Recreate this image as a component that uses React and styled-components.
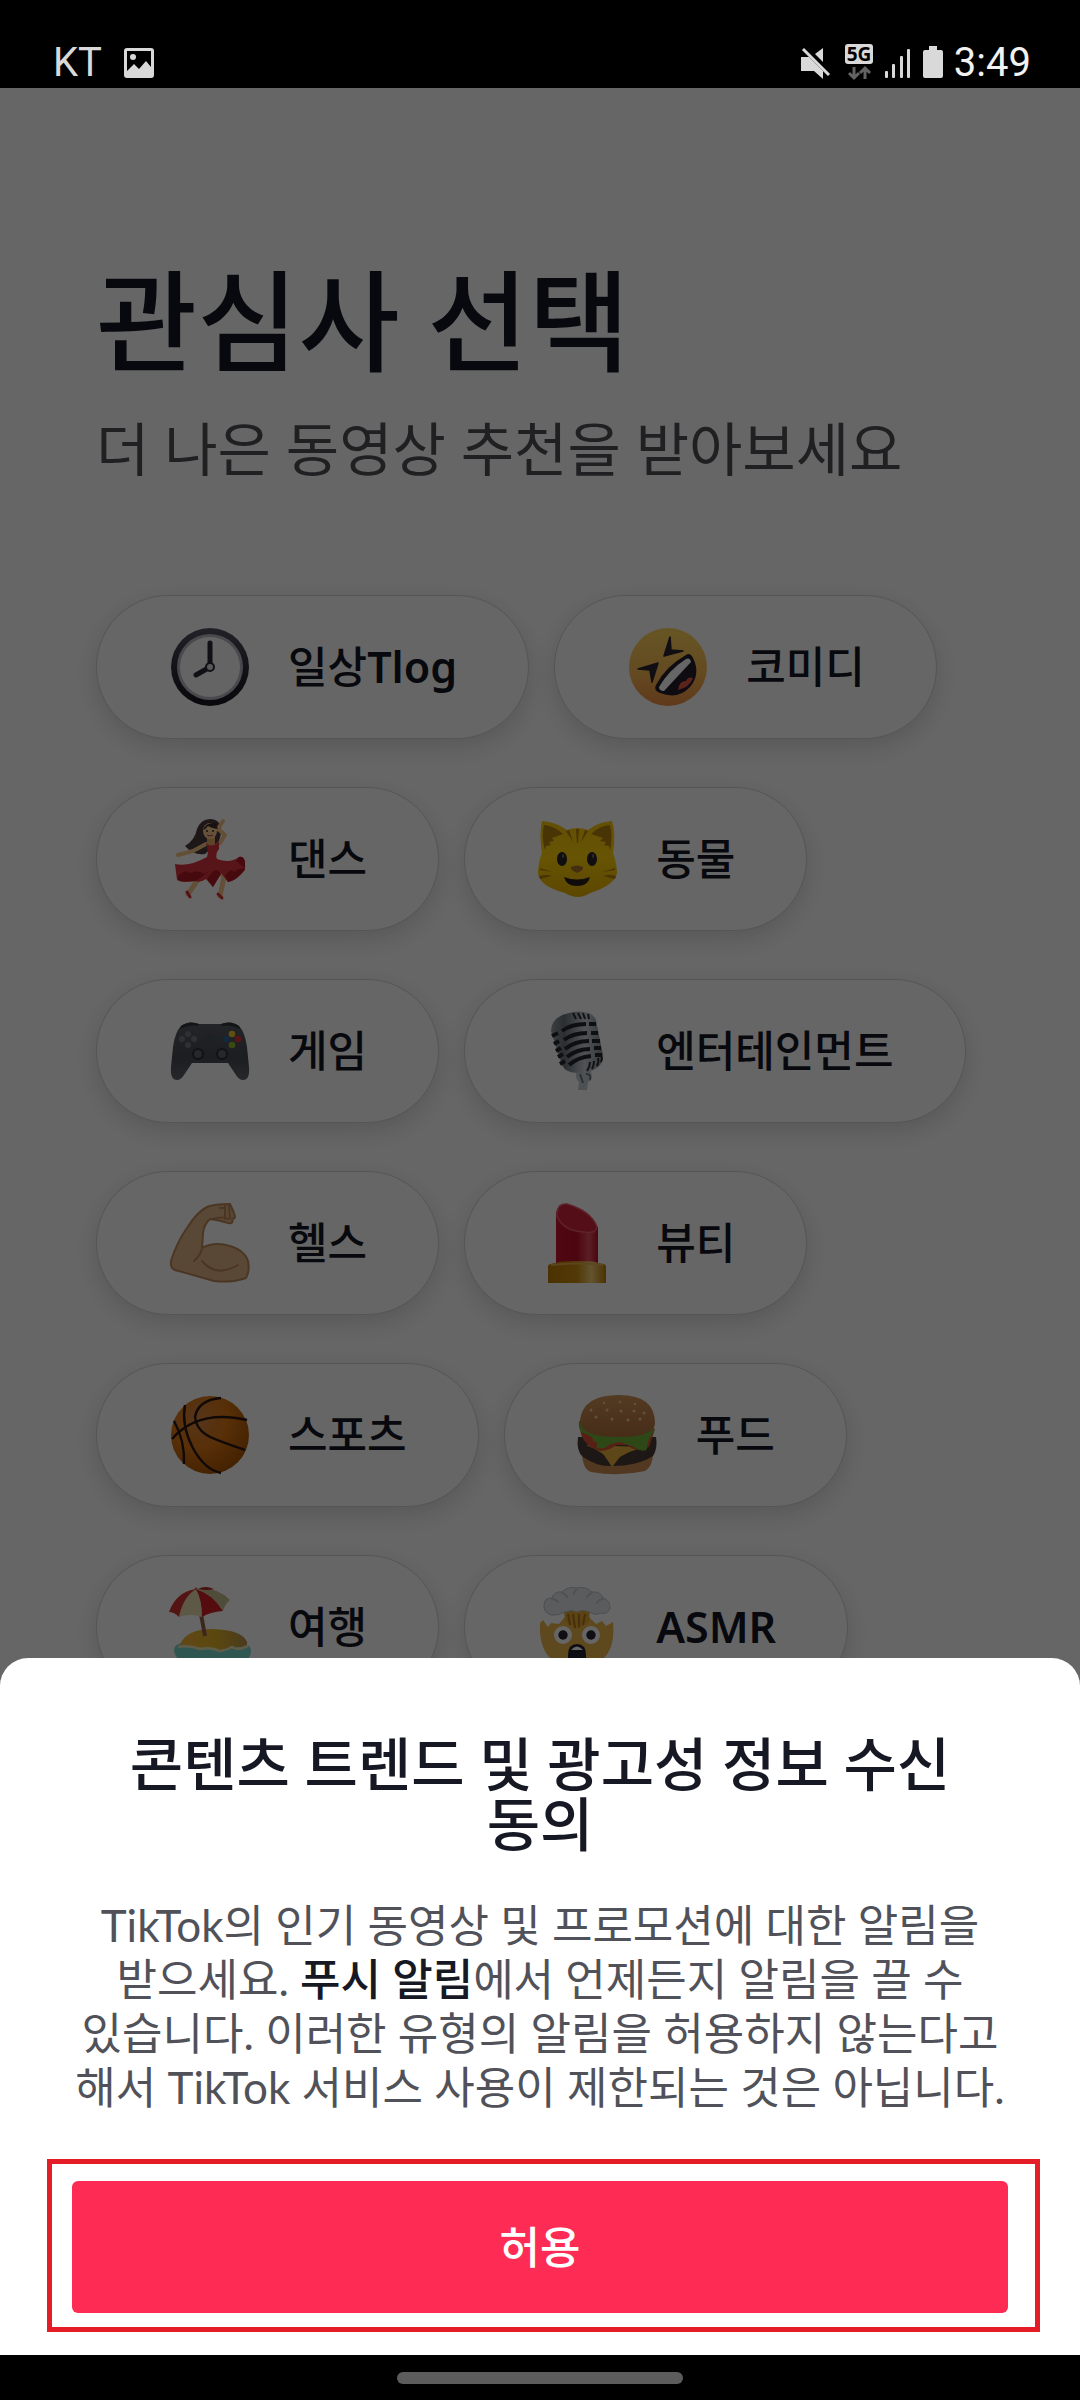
import React, { useState } from 'react';
import styled, { createGlobalStyle, ThemeProvider } from 'styled-components';

const theme = {
  color: {
    text: '#161823',
    subText: '#515259',
    primary: '#fe2c55',
    frame: '#e51d27',
    status: '#d9d9d9',
    home: '#5c5c5c',
  },
  fontSize: {
    large: '110px',
    title: '58px',
    body: '44px',
    label: '43px',
    status: '40px',
  },
};

const interests = [
  { name: '일상', latin: 'Tlog', icon: <ClockIcon /> },
  { name: '코미디', icon: <LaughIcon /> },
  { name: '댄스', icon: <DanceIcon /> },
  { name: '동물', icon: <CatIcon /> },
  { name: '게임', icon: <GameIcon /> },
  { name: '엔터테인먼트', icon: <MicIcon /> },
  { name: '헬스', icon: <MuscleIcon /> },
  { name: '뷰티', icon: <LipstickIcon /> },
  { name: '스포츠', icon: <BasketballIcon /> },
  { name: '푸드', icon: <BurgerIcon /> },
  { name: '여행', icon: <BeachIcon /> },
  { name: '', latin: 'ASMR', icon: <MindBlownIcon /> },
];

export default function App() {
  const [selected, setSelected] = useState([]);

  const handleSelect = id => {
    setSelected(list =>
      list.includes(id) ? list.filter(item => item !== id) : [...list, id]
    );
  };

  return (
    <ThemeProvider theme={theme}>
      <GlobalStyle />
      <Phone>
        <StatusBar />
        <Screen>
          <Content>
            <Title>관심사 선택</Title>
            <SubTitle>더 나은 동영상 추천을 받아보세요</SubTitle>
            <ChipList>
              {interests.map(({ name, latin, icon }, id) => (
                <Chip
                  key={id}
                  type='button'
                  aria-pressed={selected.includes(id)}
                  onClick={() => handleSelect(id)}
                >
                  {icon}
                  <span>
                    {name}
                    {latin && <Latin>{latin}</Latin>}
                  </span>
                </Chip>
              ))}
            </ChipList>
          </Content>
          <Dim />
          <Sheet role='dialog' aria-labelledby='sheet-title'>
            <SheetTitle id='sheet-title'>
              콘텐츠 트렌드 및 광고성 정보 수신 동의
            </SheetTitle>
            <SheetText>
              TikTok의 인기 동영상 및 프로모션에 대한 알림을 받으세요.{' '}
              <strong>푸시 알림</strong>에서 언제든지 알림을 끌 수 있습니다.
              이러한 유형의 알림을 허용하지 않는다고 해서 TikTok 서비스 사용이
              제한되는 것은 아닙니다.
            </SheetText>
            <Frame>
              <AllowButton type='button'>허용</AllowButton>
            </Frame>
          </Sheet>
        </Screen>
        <NavBar>
          <HomeHandle />
        </NavBar>
      </Phone>
    </ThemeProvider>
  );
}

function StatusBar() {
  return (
    <Status>
      <StatusGroup $gap='22px'>
        <span>KT</span>
        <svg width='30' height='30' viewBox='0 0 30 30' fill='currentColor'>
          <path
            fillRule='evenodd'
            d='M3 0h24a3 3 0 0 1 3 3v24a3 3 0 0 1-3 3H3a3 3 0 0 1-3-3V3a3 3 0 0 1 3-3zM3 3v20l7-7 5 5 7-8 5 6V3z'
          />
          <circle cx='9' cy='9' r='3' />
        </svg>
      </StatusGroup>
      <StatusGroup $gap='10px'>
        <svg width='34' height='34' viewBox='0 0 34 34' fill='currentColor'>
          <path d='M1 11h8l14 14v8l-9-8H1zM23 2v14l-8-8z' />
          <path d='M5 1l26 26' stroke='#000' strokeWidth='3' />
          <path d='M3 3l26 26' stroke='currentColor' strokeWidth='3' />
        </svg>
        <svg width='30' height='45' viewBox='0 -4 30 45'>
          <rect x='1' width='28' height='20' rx='3' fill='currentColor' />
          <text
            x='15'
            y='17'
            textAnchor='middle'
            fontFamily='Open Sans, sans-serif'
            fontWeight='700'
            fontSize='19'
            fill='#000'
          >
            5G
          </text>
          <path
            d='M10 23v11M5 29l5 5 5-5M21 35V24M16 29l5-5 5 5'
            fill='none'
            stroke='#636363'
            strokeWidth='3'
          />
        </svg>
        <svg width='28' height='32' viewBox='0 0 28 32' fill='currentColor'>
          <rect x='1' y='24' width='3' height='7' rx='1' />
          <rect x='8' y='17' width='3' height='14' rx='1' />
          <rect x='16' y='9' width='3' height='22' rx='1' />
          <rect x='23' y='2' width='3' height='29' rx='1' />
        </svg>
        <svg width='22' height='33' viewBox='0 0 22 33' fill='currentColor'>
          <path d='M7 0h8v4h4a2 2 0 0 1 2 2v24a2 2 0 0 1-2 2H3a2 2 0 0 1-2-2V6a2 2 0 0 1 2-2h4z' />
        </svg>
        <Clock>3:49</Clock>
      </StatusGroup>
    </Status>
  );
}

function Emoji({ children }) {
  return (
    <svg width='80' height='80' viewBox='0 0 80 80' overflow='visible' aria-hidden='true'>
      {children}
    </svg>
  );
}

function ClockIcon() {
  return (
    <Emoji>
      <defs>
        <linearGradient id='clock' x1='0' y1='0' x2='0' y2='1'>
          <stop offset='0' stopColor='#555363' />
          <stop offset='0.6' stopColor='#2b2936' />
          <stop offset='1' stopColor='#17151d' />
        </linearGradient>
      </defs>
      <circle cx='40' cy='40' r='39' fill='url(#clock)' />
      <circle cx='40' cy='40' r='33' fill='#b9b7c1' />
      <circle cx='40' cy='40' r='30' fill='#f9f9f9' />
      <path
        d='M40 40V16M40 40L26 48'
        stroke='#2b2937'
        strokeWidth='5'
        strokeLinecap='round'
      />
      <circle cx='40' cy='40' r='4' fill='#ddd' stroke='#2b2937' strokeWidth='2' />
    </Emoji>
  );
}

function LaughIcon() {
  return (
    <Emoji>
      <defs>
        <linearGradient id='laugh' x1='0' y1='0' x2='0' y2='1'>
          <stop offset='0' stopColor='#ffd65a' />
          <stop offset='0.55' stopColor='#fbbb55' />
          <stop offset='1' stopColor='#ee8f42' />
        </linearGradient>
      </defs>
      <circle cx='40' cy='40' r='39' fill='url(#laugh)' />
      <path
        d='M42 10L36 29L55 24L43 23zM10 42L30 36L24 55L22 43z'
        fill='#2b2630'
        stroke='#2b2630'
        strokeWidth='1.6'
        strokeLinejoin='round'
      />
      <path
        d='M58 28Q62 25 65 31Q73 47 62 60Q50 73 32 66Q25 63 28 58Q38 39 58 28z'
        fill='#231f2c'
      />
      <path d='M58 32Q62 30 63 35L36 64Q31 64 31 60Q41 43 58 32z' fill='#fff' />
      <path d='M50 63Q51 54 58 54Q60 49 65 51Q62 60 50 63z' fill='#e5584a' />
    </Emoji>
  );
}

function DanceIcon() {
  return (
    <Emoji>
      <path
        d='M40 0C52 0 53 12 49 22L35 35Q24 37 15 27Q25 21 27 10Q31 0 40 0z'
        fill='#4d3a3c'
      />
      <path
        d='M36 25L23 32L8 36M50 24L55 16L48 10L53 2'
        fill='none'
        stroke='#f5c687'
        strokeWidth='4'
        strokeLinecap='round'
        strokeLinejoin='round'
      />
      <path d='M37 18h8v10h-8z' fill='#e3aa68' />
      <ellipse cx='40' cy='12' rx='7' ry='8' fill='#fbd091' />
      <path d='M33 11Q36 3 45 4L48 10Q41 9 38 7Q36 10 33 11z' fill='#3d2b30' />
      <circle cx='37' cy='12' r='1' fill='#3d2b30' />
      <circle cx='43' cy='12' r='1' fill='#3d2b30' />
      <path d='M37 16Q40 18 43 16' stroke='#b2313c' fill='none' />
      <path
        d='M42 48L27 62L18 75M47 48L54 58L50 77'
        fill='none'
        stroke='#f5c687'
        strokeWidth='5'
        strokeLinecap='round'
        strokeLinejoin='round'
      />
      <path
        d='M36 24Q42 30 49 22L49 30Q45 35 47 40Q60 45 69 38Q76 36 75 51Q65 63 58 63L51 54L43 68L36 60Q29 65 23 61Q13 65 7 61L5 45Q19 48 37 38Q39 33 36 24z'
        fill='#d9353f'
      />
      <path
        d='M8 57Q15 50 20 54Q29 50 34 55L41 51L26 62Q17 64 8 61zM55 57Q61 48 64 53Q70 48 75 50Q67 61 58 63zM43 52L48 51L51 55L43 68L37 60zM69 38Q76 36 75 49Q69 45 66 42z'
        fill='#b01b23'
      />
      <path
        d='M17 73L20 78M48 75L52 79'
        stroke='#d32f3b'
        strokeWidth='3'
        strokeLinecap='round'
      />
    </Emoji>
  );
}

function CatIcon() {
  return (
    <Emoji>
      <defs>
        <linearGradient id='cat' x1='0' y1='0' x2='0' y2='1'>
          <stop offset='0' stopColor='#fac60a' />
          <stop offset='0.5' stopColor='#ffd30a' />
          <stop offset='1' stopColor='#e8b000' />
        </linearGradient>
      </defs>
      <path
        d='M4 2Q18 3 29 11Q39 7 50 11Q60 3 74 2Q78 15 75 34Q79 46 79 54Q77 66 52 74Q40 82 27 74Q1 67 0 54Q0 44 4 34Q1 16 4 2z'
        fill='url(#cat)'
      />
      <path
        d='M6 6Q17 7 25 15L14 19L16 22L11 23L13 26L8 27L7 31Q3 18 6 6zM72 6Q61 7 53 15L65 19L62 22L68 23L66 26L71 27L72 31Q75 18 72 6z'
        fill='#b5820c'
      />
      <path
        d='M38 10h3l-1 14h-1zM28 12l3-1l4 12zM50 12l-3-1l-4 12zM2 49l13 4l-13-2zM1 57q7-2 13 0l-12 3zM77 49l-13 4l13-2zM78 57q-7-2-13 0l12 3z'
        fill='#b78306'
      />
      <ellipse cx='24' cy='40' rx='5' ry='7' fill='#28242b' />
      <ellipse cx='54' cy='40' rx='5' ry='7' fill='#28242b' />
      <ellipse cx='25' cy='37' rx='1' ry='2' fill='#77716e' />
      <ellipse cx='55' cy='37' rx='1' ry='2' fill='#77716e' />
      <path d='M33 48Q39 45 45 48Q46 51 39 54Q32 51 33 48z' fill='#b07628' />
      <path d='M26 58Q39 63 52 58Q50 67 39 67Q28 67 26 58z' fill='#28201c' />
    </Emoji>
  );
}

function GameIcon() {
  return (
    <Emoji>
      <defs>
        <linearGradient id='pad' x1='0' y1='0' x2='0' y2='1'>
          <stop offset='0' stopColor='#585c63' />
          <stop offset='0.6' stopColor='#464a51' />
          <stop offset='1' stopColor='#606369' />
        </linearGradient>
      </defs>
      <path
        d='M11 15Q19 9 29 13H51Q61 9 69 15Q75 21 77 36L79 56Q80 69 73 69Q69 69 66 64L58 52H22L14 64Q11 69 7 69Q0 69 1 56L3 36Q5 21 11 15z'
        fill='url(#pad)'
      />
      <path d='M11 15Q19 9 29 13L28 15Q19 13 10 18zM69 15Q61 9 51 13L52 15Q61 13 70 18z' fill='#33363c' />
      {[28, 52].map(x => (
        <g key={x}>
          <circle cx={x} cy='43' r='6' fill='#2a2d33' />
          <circle cx={x} cy='43' r='4' fill='#5d6168' />
        </g>
      ))}
      <g fill='#737a82'>
        <circle cx='18' cy='23' r='3' />
        <circle cx='18' cy='34' r='3' />
        <circle cx='12' cy='28' r='3' />
        <circle cx='24' cy='28' r='3' />
      </g>
      <circle cx='40' cy='28' r='5' fill='#475459' />
      <circle cx='62' cy='23' r='3.3' fill='#edc62f' />
      <circle cx='68' cy='28' r='3.3' fill='#dc3436' />
      <circle cx='62' cy='34' r='3.3' fill='#93ba30' />
      <circle cx='56' cy='28' r='3.3' fill='#2b6599' />
    </Emoji>
  );
}

function MicIcon() {
  return (
    <Emoji>
      <defs>
        <linearGradient id='mic' x1='0' y1='0' x2='1' y2='0'>
          <stop offset='0' stopColor='#969ea3' />
          <stop offset='0.25' stopColor='#6c757c' />
          <stop offset='0.65' stopColor='#c9d0d4' />
          <stop offset='1' stopColor='#848c92' />
        </linearGradient>
      </defs>
      <path d='M38 60L53 59Q55 71 50 71L49 79H40L41 71Q37 68 38 60z' fill='#c3cbd0' />
      <path d='M42 63l3 9M48 63q6 0 4 6' stroke='#6a747b' strokeWidth='2' fill='none' />
      <path
        d='M13 20Q13 6 31 2Q53 -3 58 9L65 44Q66 56 50 61Q29 65 24 54z'
        fill='url(#mic)'
      />
      <g fill='none' stroke='#24272b' strokeWidth='4'>
        <path d='M24 20Q33 13 48 13M26 29Q35 22 49 22M27 38Q37 30 51 30M29 46Q39 38 52 38M31 54Q40 46 53 45' />
        <path d='M51 13h7M53 22h7M54 30h8M56 37h7M57 44h7' />
        <path d='M14 25l6-3M16 33l5-3M18 40l5-3M20 46l5-3M22 53l5-3' strokeWidth='4' />
      </g>
      <path
        d='M35 2l3 6M40 2l3 6M45 2l2 6M50 3l1 5M49 60q3-4 3-9M54 58q2-4 2-8M59 55q2-4 1-8M63 51q1-3 1-5'
        stroke='#292d31'
        strokeWidth='2'
        fill='none'
      />
    </Emoji>
  );
}

function MuscleIcon() {
  return (
    <Emoji>
      <path
        d='M37 4Q44 1 60 1Q63 7 65 13Q65 16 62 16Q64 21 58 20Q49 17 40 16Q34 21 33 30L32 45Q43 39 56 42Q74 46 78 58Q80 68 76 75Q62 80 44 78Q20 71 5 67Q0 65 1 58Q7 39 17 25Q27 9 37 4z'
        fill='#e2b587'
        stroke='#bb8659'
        strokeWidth='2'
        strokeLinejoin='round'
      />
      <path
        d='M32 45Q31 52 24 58M32 58Q46 75 68 62M43 16Q51 13 59 16M55 3v13M59 3l1 12M50 5l5 0'
        fill='none'
        stroke='#bb8659'
        strokeWidth='2'
        strokeLinecap='round'
      />
    </Emoji>
  );
}

function LipstickIcon() {
  return (
    <Emoji>
      <defs>
        <linearGradient id='lip' x1='0' y1='0' x2='1' y2='0'>
          <stop offset='0' stopColor='#c8152e' />
          <stop offset='0.5' stopColor='#bd1028' />
          <stop offset='0.78' stopColor='#e34c5a' />
          <stop offset='1' stopColor='#bd1028' />
        </linearGradient>
        <linearGradient id='gold' x1='0' y1='0' x2='1' y2='0'>
          <stop offset='0' stopColor='#bd7e04' />
          <stop offset='0.5' stopColor='#cc8f12' />
          <stop offset='0.75' stopColor='#f6cf77' />
          <stop offset='1' stopColor='#bd7e04' />
        </linearGradient>
      </defs>
      <path d='M18 10Q20 0 28 1Q52 6 60 25V61H18z' fill='url(#lip)' />
      <path
        d='M19 10Q20 0 29 1Q53 8 59 24Q58 31 46 29Q25 28 19 13z'
        fill='#d2243d'
        stroke='#ea5a68'
        strokeWidth='1.5'
      />
      <path d='M10 63Q10 61 18 60Q20 58 39 58Q58 58 60 60Q68 61 68 63V80H10z' fill='url(#gold)' />
      <path d='M13 62Q39 59 65 62' stroke='#e8b04f' strokeWidth='2' fill='none' />
    </Emoji>
  );
}

function BasketballIcon() {
  return (
    <Emoji>
      <defs>
        <radialGradient id='ball' cx='0.35' cy='0.3' r='0.75'>
          <stop offset='0' stopColor='#d68644' />
          <stop offset='0.5' stopColor='#dc7714' />
          <stop offset='1' stopColor='#a85404' />
        </radialGradient>
      </defs>
      <circle cx='40' cy='40' r='39' fill='url(#ball)' />
      <path
        d='M2 44Q28 14 77 25M51 3Q28 5 25 22C27 43 50 45 75 55M15 10C10 37 28 73 51 78M4 26Q15 46 14 69'
        fill='none'
        stroke='#2c1710'
        strokeWidth='2.4'
      />
    </Emoji>
  );
}

function BurgerIcon() {
  return (
    <Emoji>
      <defs>
        <linearGradient id='bun' x1='0' y1='0' x2='0' y2='1'>
          <stop offset='0' stopColor='#d29359' />
          <stop offset='1' stopColor='#b0703c' />
        </linearGradient>
      </defs>
      <path d='M4 56Q4 74 13 77Q40 82 67 76Q75 72 75 57z' fill='#cd8c50' />
      <path d='M0 42Q-2 56 5 62Q20 72 33 71Q60 71 75 61Q80 53 78 42z' fill='#4a3a36' />
      <path d='M8 50Q20 55 26 60L34 72L42 62Q52 56 66 52z' fill='#e8b03a' />
      <path d='M2 33Q3 50 22 56Q33 55 38 50H49Q58 58 71 52L77 34z' fill='#dc4e36' />
      <path
        d='M1 26Q0 36 5 38Q16 41 15 46Q20 46 19 53Q26 55 31 50Q43 45 47 49Q56 51 61 55Q69 57 69 53Q70 43 76 37V27z'
        fill='#74b138'
      />
      <path d='M2 25Q5 0 41 0Q76 0 77 27Q78 42 40 42Q1 42 2 25z' fill='url(#bun)' />
      <g fill='#f0ca9c'>
        <circle cx='26' cy='8' r='1.2' />
        <circle cx='42' cy='7' r='1.2' />
        <circle cx='57' cy='9' r='1.2' />
        <circle cx='13' cy='15' r='1.5' />
        <circle cx='29' cy='15' r='1.5' />
        <circle cx='43' cy='16' r='1.5' />
        <circle cx='56' cy='16' r='1.5' />
        <circle cx='66' cy='18' r='1.5' />
        <circle cx='18' cy='22' r='1.5' />
        <circle cx='34' cy='24' r='1.5' />
        <circle cx='50' cy='25' r='1.5' />
        <circle cx='62' cy='24' r='1.5' />
      </g>
    </Emoji>
  );
}

function BeachIcon() {
  return (
    <Emoji>
      <defs>
        <linearGradient id='sand' x1='0' y1='0' x2='1' y2='0'>
          <stop offset='0' stopColor='#f5b03c' />
          <stop offset='0.5' stopColor='#e5b525' />
          <stop offset='1' stopColor='#b8924a' />
        </linearGradient>
      </defs>
      <path d='M4 63Q5 54 18 58L70 58Q81 56 81 64Q81 80 43 80Q5 80 4 63z' fill='#79d8cd' />
      <path d='M10 57Q17 42 43 42Q72 43 77 55Q79 61 65 60Q55 66 40 61Q25 64 10 57z' fill='url(#sand)' />
      <path
        d='M8 60Q20 58 30 62Q42 60 49 64Q57 63 62 60Q67 64 78 59'
        fill='none'
        stroke='#e9e6bb'
        strokeWidth='2.5'
      />
      <path d='M31 27L35 49' stroke='#94624a' strokeWidth='4' />
      <path d='M-1 25Q6 5 26 2L9 30Q4 25 -1 25z' fill='#d43434' />
      <path d='M9 30Q13 10 26 2Q32 14 32 30Q20 26 9 30z' fill='#eadfb2' />
      <path d='M32 30Q32 13 26 2Q43 7 53 24Q40 25 32 30z' fill='#d22024' />
      <path d='M53 24Q43 7 26 2Q47 -1 60 13Q55 17 53 24z' fill='#c9be92' />
      <path d='M28 2Q35 -2 44 2Q39 4 28 2z' fill='#b02b2c' />
      <circle cx='26' cy='2' r='1.5' fill='#c76a46' />
    </Emoji>
  );
}

function MindBlownIcon() {
  return (
    <Emoji>
      <path
        d='M2 36L5 33L10 40L13 36L21 37L27 30H51L58 37L64 34L68 39L75 35Q79 80 39 80Q0 80 2 36z'
        fill='#ebb44c'
      />
      <path d='M26 22H52L51 35L41 42L27 35z' fill='#e5a834' />
      <path d='M30 27l2 11M35 27l2 14M41 27v13M47 27l-2 11' stroke='#b5731a' strokeWidth='2' />
      <path
        d='M13 28Q5 25 6 18Q6 11 14 11Q16 4 24 5Q30 -1 39 1Q48 -1 54 5Q62 4 65 11Q72 13 72 21Q70 28 62 26Q57 29 52 25Q44 22 39 25Q34 22 27 25Q20 29 13 28z'
        fill='#e3e6e9'
        stroke='#bcc0c4'
        strokeWidth='1'
      />
      <path
        d='M14 12Q18 12 20 15M24 6Q28 7 29 10M39 2Q36 4 36 7M54 6Q50 7 49 10M65 12Q61 12 59 16'
        fill='none'
        stroke='#c6cace'
        strokeWidth='2'
        strokeLinecap='round'
      />
      <circle cx='25' cy='48' r='9' fill='#fff' />
      <circle cx='53' cy='48' r='9' fill='#fff' />
      <circle cx='25' cy='48' r='4.7' fill='#262330' />
      <circle cx='53' cy='48' r='4.7' fill='#262330' />
      <path d='M30 68Q30 57 39 57Q48 57 48 68V80H30z' fill='#252130' />
      <path d='M33 63Q39 56 45 63z' fill='#fff' />
    </Emoji>
  );
}

const GlobalStyle = createGlobalStyle`
  * {
    box-sizing: border-box;
  }

  body {
    margin: 0;
    font-family: 'Lato', 'Noto Sans CJK KR', sans-serif;
    color: ${theme.color.text};
    background-color: #000;
  }

  h1, h2, p {
    margin: 0;
  }

  button {
    font-family: inherit;
    color: inherit;
    cursor: pointer;
  }
`;

const Phone = styled.div`
  display: flex;
  flex-direction: column;
  min-height: 100vh;
`;

const Status = styled.header`
  display: flex;
  justify-content: space-between;
  align-items: flex-end;
  height: 88px;
  padding: 0 49px 3px 53px;
  font-family: 'Roboto', sans-serif;
  font-size: ${props => props.theme.fontSize.status};
  line-height: 45px;
  color: ${props => props.theme.color.status};
`;

const StatusGroup = styled.div`
  display: flex;
  align-items: center;
  gap: ${props => props.$gap};
`;

const Clock = styled.time`
  color: #f2f2f2;
`;

const Screen = styled.main`
  position: relative;
  flex: 1;
  display: flex;
  flex-direction: column;
  overflow: hidden;
  background-color: #fff;
`;

const Content = styled.section`
  padding: 172px 96px 0;
`;

const Title = styled.h1`
  font-size: ${props => props.theme.fontSize.large};
  font-weight: 500;
  line-height: 120px;
`;

const SubTitle = styled.p`
  margin-top: 33px;
  font-size: ${props => props.theme.fontSize.title};
  line-height: 72px;
  color: ${props => props.theme.color.subText};
`;

const ChipList = styled.div`
  display: flex;
  flex-wrap: wrap;
  gap: 48px 25px;
  margin-top: 110px;
`;

const Chip = styled.button`
  display: flex;
  align-items: center;
  gap: 38px;
  height: 144px;
  padding: 0 71px 0 73px;
  border: 1px solid #d4d4d4;
  border-radius: 72px;
  background-color: #fff;
  box-shadow: 0 8px 24px rgba(0, 0, 0, 0.14);
  font-size: ${props => props.theme.fontSize.label};
  font-weight: 500;
  line-height: 54px;
  white-space: nowrap;
`;

const Latin = styled.span`
  font-family: 'Noto Sans', sans-serif;
  font-weight: 600;
`;

const Dim = styled.div`
  position: absolute;
  inset: 0;
  background-color: rgba(0, 0, 0, 0.6);
`;

const Sheet = styled.section`
  position: absolute;
  left: 0;
  right: 0;
  bottom: 0;
  padding-bottom: 23px;
  border-radius: 28px 28px 0 0;
  background-color: #fff;
  text-align: center;
  word-break: keep-all;
`;

const SheetTitle = styled.h2`
  padding: 76px 96px 0;
  font-size: ${props => props.theme.fontSize.title};
  font-weight: 500;
  line-height: 60px;
`;

const SheetText = styled.p`
  padding: 44px 72px 0;
  font-size: ${props => props.theme.fontSize.body};
  line-height: 54px;
  color: ${props => props.theme.color.subText};

  strong {
    font-weight: 500;
    color: ${props => props.theme.color.text};
  }
`;

const Frame = styled.div`
  margin: 45px 40px 0 47px;
  padding: 17px 27px 14px 20px;
  border: 5px solid ${props => props.theme.color.frame};
`;

const AllowButton = styled.button`
  display: block;
  width: 100%;
  height: 132px;
  border: none;
  border-radius: 6px;
  background-color: ${props => props.theme.color.primary};
  font-size: ${props => props.theme.fontSize.body};
  font-weight: 500;
  line-height: 54px;

  && {
    color: #fff;
  }
`;

const NavBar = styled.footer`
  display: flex;
  justify-content: center;
  align-items: center;
  height: 45px;
`;

const HomeHandle = styled.div`
  width: 286px;
  height: 12px;
  border-radius: 6px;
  background-color: ${props => props.theme.color.home};
`;
